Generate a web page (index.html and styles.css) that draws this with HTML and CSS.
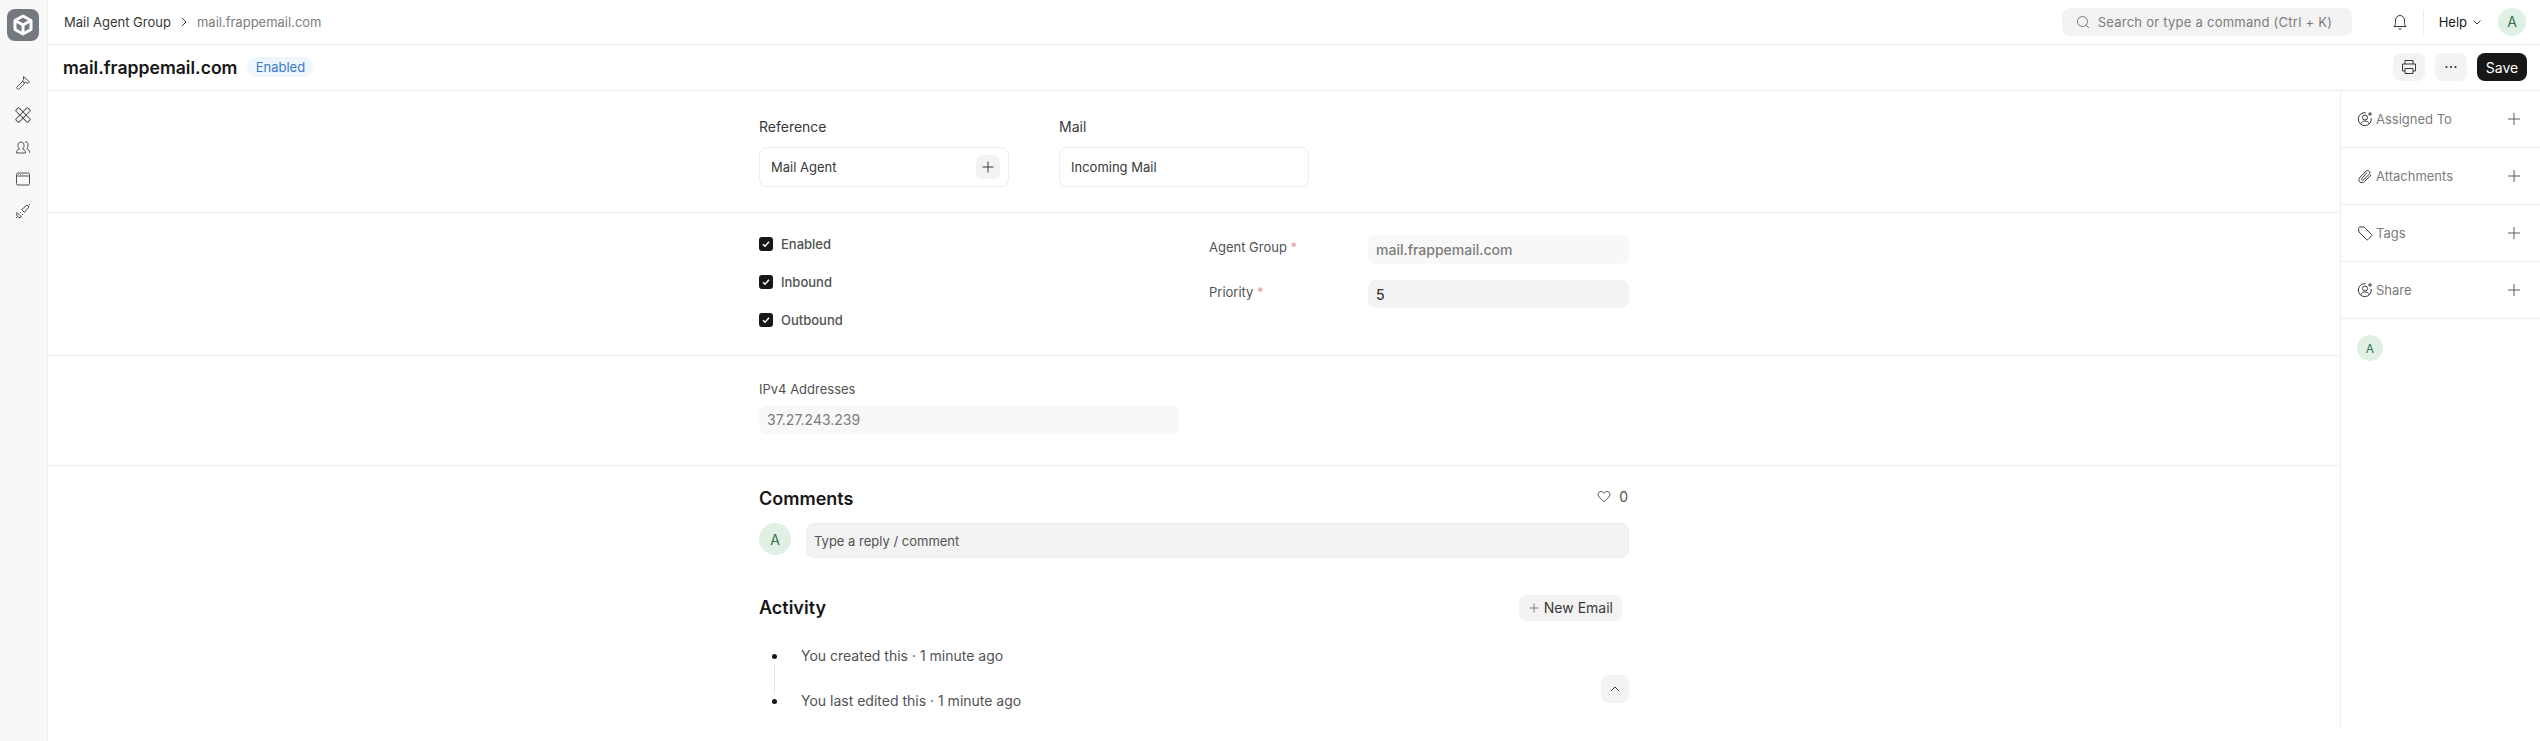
FILE: index.html
```html
<!DOCTYPE html>
<html lang="en">
<head>
    <meta charset="UTF-8">
    <title>mail.frappemail.com</title>
    <link rel="stylesheet" href="styles.css">
</head>
<body>

<div class="app">
    <nav class="sidebar">
        <div class="logo">
            <svg width="24" height="24" viewBox="0 0 24 24" fill="none" stroke="#fff" stroke-width="3" stroke-linejoin="round" stroke-linecap="round"><path d="M12 3l8 4.500v9L12 21l-8-4.500v-9z"/><path d="M5 8l7 4 7-4M12 12v8"/></svg>
        </div>
        <div class="side-icons">
            <svg width="16" height="16" viewBox="0 0 16 16"><path d="M8.500 1.500l6 5.500-1.500 1.500-2.500-1.500-1 1-2-2 1-1.500zM7.500 6.500l2 2-5.500 5.500c-.5.500-1 .5-1.500 0l-.5-.5c-.5-.5-.5-1 0-1.500z"/></svg>
            <svg width="16" height="16" viewBox="0 0 16 16"><rect x="5.800" y="-.5" width="4.400" height="17" rx="1" transform="rotate(-45 8 8)"/><rect x="5.800" y="-.5" width="4.400" height="17" rx="1" transform="rotate(45 8 8)"/></svg>
            <svg width="16" height="16" viewBox="0 0 16 16"><path d="M1.500 14c0-2.500.8-3.500 3-4-1.200-1-1.500-2-1.500-3.500C3 4 4.200 3 6 3s3 1 3 3.500c0 1.500-.3 2.500-1.500 3.500 2.200.5 3 1.500 3 4zM10 3c2-.5 3.500 1 3 3.500 0 1.500-.5 2.500-1.300 3.200 1.600.5 2.800 1.500 2.800 4"/></svg>
            <svg width="16" height="16" viewBox="0 0 16 16"><rect x="1.500" y="2" width="13" height="12" rx="1.500"/><path d="M1.500 5h13M3.500 3.500h.5M5.500 3.500h.5M7.500 3.500h.5"/></svg>
            <svg width="16" height="16" viewBox="0 0 16 16"><path d="M2 9.500l4.500 4.500-1.500.5c-1.500.3-3-1-3.300-2.500zM1 15l1-1M6 9l-1 1M8 11l-1 1M8 5.500l4-3.500 2 2-3.500 4-1 1.500-3-3zM13.500 2.500l1.500-1.500"/></svg>
        </div>
    </nav>

    <div class="content">
        <header class="topbar">
            <div class="crumbs">
                <span class="crumb">Mail Agent Group</span>
                <svg width="12" height="12" viewBox="0 0 12 12" class="stroke-dark"><path d="M4 2l4 4-4 4"/></svg>
                <span class="crumb muted">mail.frappemail.com</span>
            </div>
            <div class="search">
                <svg width="14" height="14" viewBox="0 0 14 14" class="stroke-grey"><circle cx="6.500" cy="6.500" r="5"/><path d="M10 10l3 3"/></svg>
                <span>Search or type a command (Ctrl + K)</span>
            </div>
            <svg class="bell stroke-dark" width="16" height="18" viewBox="0 0 16 18"><path d="M2 13.500c1-1 1.500-2 1.500-4V7a4.500 4.500 0 0 1 9 0v2.500c0 2 .5 3 1.500 4zM6.500 15.500c.8 1 2.200 1 3 0"/></svg>
            <div class="vline"></div>
            <div class="help">Help
                <svg width="10" height="10" viewBox="0 0 10 10" class="stroke-dark"><path d="M1.500 3.500L5 7l3.500-3.500"/></svg>
            </div>
            <div class="avatar">A</div>
        </header>

        <div class="pagehead">
            <h1>mail.frappemail.com</h1>
            <span class="badge">Enabled</span>
            <div class="actions">
                <button class="icon-btn">
                    <svg width="16" height="16" viewBox="0 0 16 16" class="stroke-dark"><path d="M4 5V1.500h8V5M4 12H1.500V5h13v7H12M4 9.500h8v5H4z"/></svg>
                </button>
                <button class="icon-btn">
                    <svg width="14" height="4" viewBox="0 0 14 4" fill="#333"><circle cx="2.500" cy="2" r="1.100"/><circle cx="7" cy="2" r="1.100"/><circle cx="11.500" cy="2" r="1.100"/></svg>
                </button>
                <button class="save">Save</button>
            </div>
        </div>

        <div class="page">
            <main class="main">
                <section class="section links">
                    <div class="link-col">
                        <div class="link-title">Reference</div>
                        <div class="link-box">Mail Agent
                            <span class="link-plus"><svg width="12" height="12" viewBox="0 0 12 12" class="stroke-dark"><path d="M6 .5v11M.5 6h11"/></svg></span>
                        </div>
                    </div>
                    <div class="link-col">
                        <div class="link-title">Mail</div>
                        <div class="link-box">Incoming Mail</div>
                    </div>
                </section>

                <section class="section flags">
                    <div class="checks">
                        <label class="check"><span class="box"><svg width="8" height="8" viewBox="0 0 8 8"><path d="M1 4.200l2 2L7 1.800"/></svg></span>Enabled</label>
                        <label class="check"><span class="box"><svg width="8" height="8" viewBox="0 0 8 8"><path d="M1 4.200l2 2L7 1.800"/></svg></span>Inbound</label>
                        <label class="check"><span class="box"><svg width="8" height="8" viewBox="0 0 8 8"><path d="M1 4.200l2 2L7 1.800"/></svg></span>Outbound</label>
                    </div>
                    <div class="fields">
                        <div class="field">
                            <span class="field-label">Agent Group <i>*</i></span>
                            <div class="input readonly">mail.frappemail.com</div>
                        </div>
                        <div class="field">
                            <span class="field-label">Priority <i>*</i></span>
                            <div class="input">5</div>
                        </div>
                    </div>
                </section>

                <section class="section ipv4">
                    <div class="ip-label">IPv4 Addresses</div>
                    <div class="ip-input">37.27.243.239</div>
                </section>

                <section class="timeline">
                    <div class="comments-head">
                        <h2>Comments</h2>
                        <div class="likes">
                            <svg width="14" height="13" viewBox="0 0 16 15" class="stroke-dark"><path d="M8 13.500L2.300 8C.8 6.500.8 4 2.300 2.600c1.500-1.300 3.700-1.100 5 .4l.7.800.7-.8c1.300-1.500 3.500-1.700 5-.4 1.500 1.400 1.500 3.900 0 5.400z"/></svg>
                            <span>0</span>
                        </div>
                    </div>
                    <div class="reply">
                        <div class="avatar tall">A</div>
                        <div class="reply-box">Type a reply / comment</div>
                    </div>
                    <div class="activity-head">
                        <h2>Activity</h2>
                        <button class="new-email"><svg width="10" height="10" viewBox="0 0 10 10" class="stroke-grey"><path d="M5 .5v9M.5 5h9"/></svg>New Email</button>
                    </div>
                    <ul class="events">
                        <li>You created this · 1 minute ago</li>
                        <li>You last edited this · 1 minute ago</li>
                    </ul>
                    <button class="scroll-up"><svg width="10" height="6" viewBox="0 0 10 6" class="stroke-dark"><path d="M1 5l4-4 4 4"/></svg></button>
                </section>
            </main>

            <aside class="rail">
                <div class="rail-row">
                    <svg width="16" height="16" viewBox="0 0 16 16" class="stroke-dark"><path d="M14.200 7a6.500 6.500 0 1 1-5.500-5.300M5.500 6.500a2.500 2.500 0 1 0 5 0 2.500 2.500 0 0 0-5 0M3.500 13c1-2 2.500-3 4.500-3s3.500 1 4.500 3M13 1v4M11 3h4"/></svg>
                    <span>Assigned To</span>
                    <svg class="rail-plus" width="12" height="12" viewBox="0 0 12 12"><path d="M6 0v12M0 6h12"/></svg>
                </div>
                <div class="rail-row">
                    <svg width="16" height="16" viewBox="0 0 16 16" class="stroke-dark"><path d="M14 7l-6.500 6.500c-1.500 1.500-3.500 1.500-4.700.3s-1.200-3.200.3-4.700l6-6c1-1 2.300-1 3.200-.1s.9 2.200-.1 3.200l-5.700 5.700c-.5.500-1.200.5-1.600.1s-.4-1.100.1-1.600L10 4.500"/></svg>
                    <span>Attachments</span>
                    <svg class="rail-plus" width="12" height="12" viewBox="0 0 12 12"><path d="M6 0v12M0 6h12"/></svg>
                </div>
                <div class="rail-row">
                    <svg width="16" height="16" viewBox="0 0 16 16" class="stroke-dark"><path d="M1.500 3.500c0-.8.600-1.500 1.500-1.500h4l7.500 7.500c.5.500.5 1 0 1.500l-3.500 3.500c-.5.500-1 .5-1.500 0L2 7zM4.500 5h.5"/></svg>
                    <span>Tags</span>
                    <svg class="rail-plus" width="12" height="12" viewBox="0 0 12 12"><path d="M6 0v12M0 6h12"/></svg>
                </div>
                <div class="rail-row">
                    <svg width="16" height="16" viewBox="0 0 16 16" class="stroke-dark"><path d="M14.200 7a6.500 6.500 0 1 1-5.500-5.300M5.500 6.500a2.500 2.500 0 1 0 5 0 2.500 2.500 0 0 0-5 0M3.500 13c1-2 2.500-3 4.500-3s3.500 1 4.500 3M13 1v4M11 3h4"/></svg>
                    <span>Share</span>
                    <svg class="rail-plus" width="12" height="12" viewBox="0 0 12 12"><path d="M6 0v12M0 6h12"/></svg>
                </div>
                <div class="rail-foot">
                    <div class="avatar small">A</div>
                </div>
            </aside>
        </div>
    </div>
</div>

</body>
</html>
```

FILE: styles.css
```css
* {
    box-sizing: border-box;
}
html, body {
    margin: 0;
    height: 741px;
    overflow: hidden;
}
body {
    font-family: Inter, "Liberation Sans", sans-serif;
    font-size: 13px;
    color: #383838;
    background: #fff;
}
button {
    font-family: inherit;
    border: none;
    cursor: pointer;
}
svg {
    display: block;
    flex: none;
}
.stroke-dark {
    fill: none;
    stroke: #383838;
    stroke-width: 1;
}
.stroke-grey {
    fill: none;
    stroke: #7c7c7c;
    stroke-width: 1;
}
.app {
    display: flex;
    height: 741px;
}

/* left strip */
.sidebar {
    width: 48px;
    flex: none;
    background: #f8f8f8;
    border-right: 1px solid #ededed;
    padding: 9px 0 0 7px;
}
.logo {
    width: 32px;
    height: 32px;
    border-radius: 8px;
    background: #74787f;
    display: flex;
    align-items: center;
    justify-content: center;
}
.side-icons {
    display: flex;
    flex-direction: column;
    gap: 16px;
    margin: 34px 0 0 8px;
}
.side-icons svg {
    fill: none;
    stroke: #525252;
    stroke-width: 1;
}

/* top bars */
.content {
    flex: 1;
    min-width: 0;
}
.topbar {
    height: 45px;
    border-bottom: 1px solid #ededed;
    display: flex;
    align-items: center;
    padding: 0 14px 1px 16px;
}
.crumbs {
    display: flex;
    align-items: center;
    gap: 7px;
    flex: 1;
    line-height: 16px;
}
.crumb.muted {
    color: #7c7c7c;
}
.search {
    width: 290px;
    height: 28px;
    border-radius: 8px;
    background: #f3f3f3;
    display: flex;
    align-items: center;
    gap: 8px;
    padding-left: 14px;
    color: #7c7c7c;
    letter-spacing: 0.25px;
}
.bell {
    margin-left: 40px;
}
.vline {
    width: 1px;
    height: 24px;
    background: #ededed;
    margin: 0 15px;
}
.help {
    display: flex;
    align-items: center;
    gap: 5px;
    color: #171717;
    margin-right: 16px;
}
.avatar {
    width: 28px;
    height: 28px;
    border-radius: 50%;
    background: #e1f0e4;
    color: #30754a;
    font-size: 14px;
    display: flex;
    align-items: center;
    justify-content: center;
    flex: none;
}
.avatar.tall {
    width: 32px;
    height: 32px;
}
.avatar.small {
    width: 26px;
    height: 26px;
    font-size: 12px;
}
.pagehead {
    height: 46px;
    border-bottom: 1px solid #ededed;
    display: flex;
    align-items: center;
    padding: 0 13px 1px 15px;
}
h1 {
    font-size: 17.6px;
    font-weight: 600;
    color: #171717;
    margin: 0;
}
.badge {
    margin-left: 10px;
    height: 20px;
    width: 66px;
    text-align: center;
    border-radius: 10px;
    background: #edf6fd;
    color: #3b78cc;
    font-size: 13px;
    line-height: 20px;
}
.actions {
    margin-left: auto;
    display: flex;
    gap: 10px;
}
.icon-btn {
    width: 32px;
    height: 28px;
    border-radius: 8px;
    background: #f3f3f3;
    display: flex;
    align-items: center;
    justify-content: center;
    padding: 0;
}
.save {
    width: 50px;
    height: 28px;
    border-radius: 8px;
    background: #171717;
    color: #fff;
    font-size: 14px;
    padding: 0;
}

/* form */
.page {
    display: flex;
    height: 637px;
}
.main {
    width: 2293px;
    flex: none;
    border-right: 1px solid #ededed;
}
.section {
    border-bottom: 1px solid #ededed;
    padding-left: 711px;
}
.links {
    height: 122px;
    display: flex;
    gap: 50px;
    padding-top: 28px;
}
.link-col {
    width: 250px;
}
.link-title {
    font-size: 14px;
    line-height: 16px;
    color: #383838;
    margin-bottom: 12px;
}
.link-box {
    height: 40px;
    border: 1px solid #ededed;
    border-radius: 8px;
    display: flex;
    align-items: center;
    justify-content: space-between;
    padding: 0 8px 0 11px;
}
.link-plus {
    width: 24px;
    height: 24px;
    border-radius: 7px;
    background: #f3f3f3;
    display: flex;
    align-items: center;
    justify-content: center;
}
.flags {
    height: 143px;
    display: flex;
    padding-top: 22px;
}
.checks {
    width: 450px;
    display: flex;
    flex-direction: column;
    gap: 24px;
    margin-top: 2px;
}
.check {
    display: flex;
    align-items: center;
    gap: 8px;
    height: 14px;
    font-size: 13px;
    font-weight: 500;
    color: #525252;
}
.box {
    width: 14px;
    height: 14px;
    border-radius: 3px;
    background: #171717;
    display: flex;
    align-items: center;
    justify-content: center;
}
.box svg {
    fill: none;
    stroke: #fff;
    stroke-width: 1.500;
}
.fields {
    display: flex;
    flex-direction: column;
    gap: 16px;
}
.field {
    display: flex;
    align-items: flex-start;
    height: 29px;
}
.field-label {
    width: 159px;
    color: #525252;
    line-height: 25px;
}
.field-label i {
    color: #e79a9a;
    font-style: normal;
}
.input {
    width: 261px;
    height: 28px;
    border-radius: 8px;
    background: #f3f3f3;
    display: flex;
    align-items: center;
    padding-left: 8px;
    font-size: 14px;
    font-weight: 500;
    color: #383838;
}
.input.readonly {
    height: 29px;
    background: #f8f8f8;
    color: #7c7c7c;
}
.ipv4 {
    height: 110px;
    padding-top: 25px;
}
.ip-label {
    font-size: 13px;
    line-height: 16px;
    color: #525252;
    margin-bottom: 8px;
}
.ip-input {
    width: 420px;
    height: 29px;
    border-radius: 8px;
    background: #f8f8f8;
    display: flex;
    align-items: center;
    padding-left: 8px;
    font-size: 14px;
    color: #7c7c7c;
}

/* comments and activity */
.timeline {
    margin-left: 711px;
    width: 870px;
    position: relative;
}
h2 {
    font-size: 18px;
    font-weight: 600;
    color: #171717;
    margin: 0;
}
.comments-head {
    display: flex;
    justify-content: space-between;
    align-items: flex-start;
    padding-top: 22px;
    height: 57px;
}
.likes {
    display: flex;
    align-items: center;
    gap: 8px;
    height: 16px;
    padding-right: 1px;
    font-size: 14px;
    color: #525252;
}
.reply {
    display: flex;
    gap: 15px;
    align-items: flex-start;
}
.reply-box {
    flex: 1;
    height: 35px;
    border: 1px solid #ededed;
    border-radius: 8px;
    background: #f3f3f3;
    display: flex;
    align-items: center;
    padding-left: 7px;
    color: #525252;
}
.activity-head {
    display: flex;
    justify-content: space-between;
    align-items: center;
    margin-top: 36px;
    height: 27px;
    padding-right: 7px;
}
.new-email {
    height: 26px;
    border-radius: 8px;
    background: #f3f3f3;
    color: #383838;
    font-size: 14px;
    display: flex;
    align-items: center;
    gap: 5px;
    padding: 0 9px 0 10px;
}
.events {
    list-style: none;
    margin: 25px 0 0;
    padding: 0 0 0 42px;
    color: #525252;
    font-size: 14px;
}
.events li {
    position: relative;
    line-height: 20px;
    margin-bottom: 25px;
}
.events li::before {
    content: "";
    position: absolute;
    left: -29px;
    top: 8px;
    width: 5px;
    height: 5px;
    border-radius: 50%;
    background: #171717;
}
.events li:first-child::after {
    content: "";
    position: absolute;
    left: -27px;
    top: 18px;
    width: 1px;
    height: 29px;
    background: #e2e2e2;
}
.scroll-up {
    position: absolute;
    right: 0;
    top: 209px;
    width: 28px;
    height: 28px;
    border-radius: 8px;
    background: #f3f3f3;
    display: flex;
    align-items: center;
    justify-content: center;
    padding: 0;
}

/* right rail */
.rail {
    flex: 1;
    min-width: 0;
}
.rail-row {
    height: 57px;
    border-bottom: 1px solid #ededed;
    display: flex;
    align-items: center;
    padding: 0 20px 0 16px;
    color: #7c7c7c;
    gap: 3px;
}
.rail-plus {
    margin-left: auto;
    fill: none;
    stroke: #5c5c5c;
    stroke-width: 1;
}
.rail-foot {
    padding: 16px;
}
```
